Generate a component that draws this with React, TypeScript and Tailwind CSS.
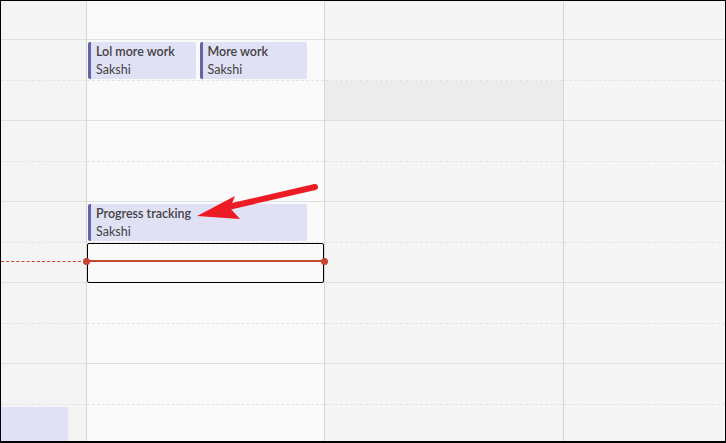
const font = { fontFamily: 'Lato, "Open Sans", Arial, sans-serif' };

function EventCard({ title, who, className = '' }: { title: string; who: string; className?: string }) {
  return (
    <div className={`h-[37px] rounded-[2px] bg-[#e1e1f6] border-l-[3px] border-[#6264a7] pl-[5px] pt-[1px] text-[12.5px] leading-[18px] text-[#424242] overflow-hidden ${className}`}>
      <div className="font-semibold whitespace-nowrap">{title}</div>
      <div className="whitespace-nowrap">{who}</div>
    </div>
  );
}

function TimeColumn() {
  return (
    <div className="w-[86px] shrink-0 border-r border-[#d6d6d6] bg-[#f4f4f4]">
      <div className="h-[39px] border-b border-[#e0e0e0]" />
      {[0, 1, 2, 3].map((i) => (
        <div key={i}>
          <div className="h-[41px] border-b border-dashed border-[#e3e3e3]" />
          <div className="h-[40px] border-b border-[#e0e0e0]" />
        </div>
      ))}
      <div className="h-[41px] border-b border-dashed border-[#e3e3e3]" />
      <div className="h-[40px] pt-[2px]">
        <div className="h-[38px] w-[67px] rounded-r-[2px] bg-[#e1e1f6]" />
      </div>
    </div>
  );
}

function MainDayColumn() {
  return (
    <div className="w-[238px] shrink-0 border-r border-[#d6d6d6] bg-[#fafafa]">
      <div className="h-[39px] border-b border-[#e0e0e0]" />
      {/* 9:00 */}
      <div className="h-[41px] border-b border-dashed border-[#e3e3e3] pt-[2px] pl-[1px] pr-[17px]">
        <div className="grid grid-cols-2 gap-[4px]">
          <EventCard title="Lol more work" who="Sakshi" />
          <EventCard title="More work" who="Sakshi" />
        </div>
      </div>
      <div className="h-[40px] border-b border-[#e0e0e0]" />
      <div className="h-[41px] border-b border-dashed border-[#e3e3e3]" />
      <div className="h-[40px] border-b border-[#e0e0e0]" />
      {/* 11:00 */}
      <div className="h-[41px] border-b border-dashed border-[#e3e3e3] pt-[2px] pl-[1px] pr-[17px]">
        <EventCard title="Progress tracking" who="Sakshi" />
      </div>
      <div className="h-[40px] border-b border-[#e0e0e0] relative">
        <div className="absolute left-0 top-0 w-[237px] h-[40px] border border-black rounded-[2px]" />
      </div>
      <div className="h-[41px] border-b border-dashed border-[#e3e3e3]" />
      <div className="h-[40px] border-b border-[#e0e0e0]" />
      <div className="h-[41px] border-b border-dashed border-[#e3e3e3]" />
      <div className="h-[40px]" />
    </div>
  );
}

function PlainColumn({ highlight }: { highlight?: boolean }) {
  return (
    <div className="bg-[#f5f5f5]">
      <div className="h-[39px] border-b border-[#e0e0e0]" />
      <div className="h-[41px] border-b border-dashed border-[#e3e3e3]" />
      <div className={`h-[40px] border-b border-[#e0e0e0] ${highlight ? 'bg-[#ececec]' : ''}`} />
      {[0, 1, 2, 3].map((i) => (
        <div key={i}>
          <div className="h-[41px] border-b border-dashed border-[#e3e3e3]" />
          <div className="h-[40px] border-b border-[#e0e0e0]" />
        </div>
      ))}
    </div>
  );
}

export default function App() {
  return (
    <div className="w-[726px] h-[443px] border-t border-l border-r border-b-2 border-black bg-white overflow-hidden" style={font}>
      <div className="relative w-[724px] h-[440px] overflow-hidden flex items-start">
        <TimeColumn />
        <MainDayColumn />
        <div className="w-[239px] shrink-0 border-r border-[#d6d6d6]">
          <PlainColumn highlight />
        </div>
        <div className="flex-1">
          <PlainColumn />
        </div>

        {/* current time indicator */}
        <div className="absolute left-0 top-[260px] w-[85px] border-t border-dashed border-[#c8462e]" />
        <div className="absolute left-[85px] top-[259px] w-[239px] h-[2px] bg-[#c8462e]" />
        <div className="absolute left-[82px] top-[257px] w-[7px] h-[7px] rounded-full bg-[#c8462e]" />
        <div className="absolute left-[320px] top-[257px] w-[7px] h-[7px] rounded-full bg-[#c8462e]" />

        {/* annotation arrow */}
        <svg className="absolute left-0 top-0 pointer-events-none" width="724" height="440" viewBox="-1 -1 724 440">
          <line x1="226" y1="205" x2="313" y2="185" stroke="#ed1c24" strokeWidth="6" strokeLinecap="round" />
          <polygon points="195,214 233,194 228,206 238,217" fill="#ed1c24" />
        </svg>
      </div>
    </div>
  );
}
